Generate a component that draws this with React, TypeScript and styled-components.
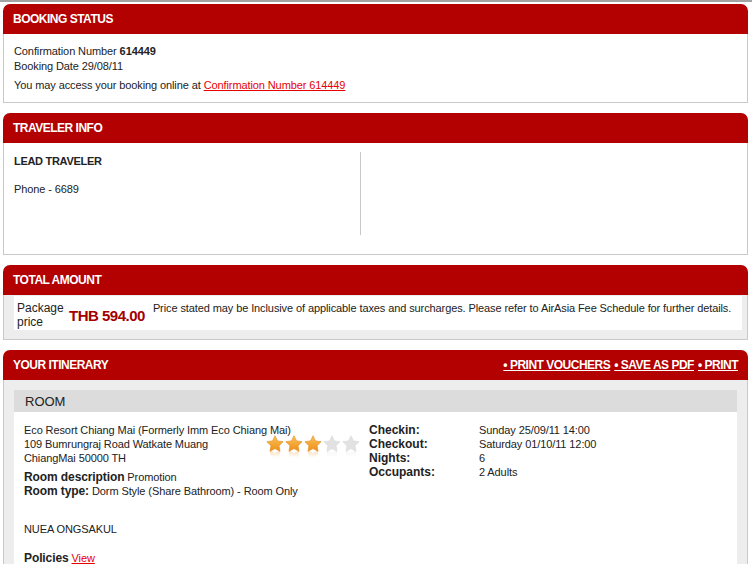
import React from "react";
import styled, { createGlobalStyle } from "styled-components";

const GlobalStyle = createGlobalStyle`
  body {
    margin: 0;
    background: #fff;
    font-family: "Liberation Sans", Arial, sans-serif;
    font-size: 11px;
    letter-spacing: -0.1px;
    color: #222;
  }
`;

const Page = styled.div`
  border-top: 2px solid #a3a3a3;
  padding: 2px 4px 0 3px;
`;

const Panel = styled.section`
  margin-bottom: 10px;
`;

const PanelHeader = styled.div`
  height: 30px;
  background: #b30000;
  border-radius: 7px 7px 0 0;
  display: flex;
  align-items: center;
  justify-content: space-between;
  padding: 0 10px;
  color: #fff;
  font-weight: bold;
  font-size: 12px;
  letter-spacing: -0.5px;
`;

const HeaderLinks = styled.div`
  display: flex;
  gap: 4px;
`;

const HeaderLink = styled.a`
  color: #fff;
  text-decoration: underline;
  cursor: pointer;
`;

const PanelBody = styled.div<{ $grey?: boolean }>`
  border: 1px solid #c9c9c9;
  border-top: none;
  background: ${(p) => (p.$grey ? "#ededed" : "#fff")};
`;

const StatusBody = styled.div`
  padding: 10px 10px 9px;
  line-height: 15px;
`;

const AccessLine = styled.div`
  margin-top: 4px;
`;

const RedLink = styled.a`
  color: #e60000;
  text-decoration: underline;
  cursor: pointer;
`;

const TravelerBody = styled.div`
  display: flex;
  padding: 9px 0 19px 10px;
`;

const LeadColumn = styled.div`
  width: 346px;
  height: 81px;
  border-right: 1px solid #c8c8c8;
  padding-top: 2px;
  line-height: 14px;
`;

const LeadTitle = styled.div`
  font-weight: bold;
  font-size: 11px;
  letter-spacing: -0.3px;
  margin-bottom: 14px;
`;

const TotalBody = styled.div`
  padding: 1px 5px 9px 10px;
`;

const PriceRow = styled.div`
  background: #fff;
  display: flex;
  align-items: flex-start;
  padding: 5px 3px 1px;
`;

const PriceLabel = styled.div`
  width: 46px;
  flex-shrink: 0;
  font-size: 12px;
  line-height: 14px;
  letter-spacing: 0;
`;

const PriceValue = styled.div`
  align-self: center;
  margin: 0 8px 0 6px;
  font-size: 15px;
  font-weight: bold;
  letter-spacing: -0.5px;
  color: #a30000;
  white-space: nowrap;
`;

const PriceNote = styled.div`
  line-height: 14px;
  white-space: nowrap;
`;

const ItineraryBody = styled.div`
  padding: 10px 10px 0;
`;

const RoomBox = styled.div`
  background: #fff;
`;

const RoomHeader = styled.div`
  height: 22px;
  background: #dcdcdc;
  padding-left: 11px;
  display: flex;
  align-items: center;
  font-size: 13px;
  letter-spacing: 0;
  color: #222;
`;

const RoomContent = styled.div`
  display: flex;
  padding: 11px 10px 2px;
  line-height: 14px;
`;

const RoomLeft = styled.div`
  width: 345px;
`;

const AddressGrid = styled.div`
  display: grid;
  grid-template-columns: 243px auto;
`;

const FullLine = styled.div`
  grid-column: 1 / -1;
  white-space: nowrap;
`;

const Stars = styled.div`
  display: flex;
  gap: 1px;
  align-self: center;
  margin: -2px 0 -1px -1px;
  -webkit-box-reflect: below -2px linear-gradient(transparent 55%, rgba(255, 255, 255, 0.35));
`;

const InfoLine = styled.div<{ $gap?: number }>`
  margin-top: ${(p) => p.$gap ?? 0}px;
  white-space: nowrap;
`;

const Strong = styled.b`
  font-size: 12px;
  letter-spacing: -0.1px;
`;

const Details = styled.div`
  display: grid;
  grid-template-columns: 110px auto;
  align-content: start;
`;

const DetailLabel = styled.div`
  font-weight: bold;
  font-size: 12px;
  letter-spacing: 0;
`;

const STAR = "M9 0.8l2.5 5.1 5.6 0.8-4.05 3.95 0.95 5.6L9 13.6l-5 2.65 0.95-5.6L0.9 6.7l5.6-0.8z";

function Star({ on }: { on: boolean }) {
  return (
    <svg width="18" height="17" viewBox="0 0 18 17">
      <defs>
        <linearGradient id="gold" x1="0" y1="0" x2="0" y2="1">
          <stop offset="0" stopColor="#fbc25a" />
          <stop offset="1" stopColor="#ee8e17" />
        </linearGradient>
      </defs>
      <path
        d={STAR}
        fill={on ? "url(#gold)" : "#e2e2e2"}
        stroke={on ? "#e08a1a" : "#d6d6d6"}
        strokeWidth="0.6"
      />
    </svg>
  );
}

export default function App() {
  const details: [string, string][] = [
    ["Checkin:", "Sunday 25/09/11 14:00"],
    ["Checkout:", "Saturday 01/10/11 12:00"],
    ["Nights:", "6"],
    ["Occupants:", "2 Adults"],
  ];

  return (
    <Page>
      <GlobalStyle />

      <Panel>
        <PanelHeader>BOOKING STATUS</PanelHeader>
        <PanelBody>
          <StatusBody>
            <div>
              Confirmation Number <b>614449</b>
            </div>
            <div>Booking Date 29/08/11</div>
            <AccessLine>
              You may access your booking online at{" "}
              <RedLink>Confirmation Number 614449</RedLink>
            </AccessLine>
          </StatusBody>
        </PanelBody>
      </Panel>

      <Panel>
        <PanelHeader>TRAVELER INFO</PanelHeader>
        <PanelBody>
          <TravelerBody>
            <LeadColumn>
              <LeadTitle>LEAD TRAVELER</LeadTitle>
              <div>Phone - 6689</div>
            </LeadColumn>
          </TravelerBody>
        </PanelBody>
      </Panel>

      <Panel>
        <PanelHeader>TOTAL AMOUNT</PanelHeader>
        <PanelBody $grey>
          <TotalBody>
            <PriceRow>
              <PriceLabel>Package price</PriceLabel>
              <PriceValue>THB 594.00</PriceValue>
              <PriceNote>
                Price stated may be Inclusive of applicable taxes and surcharges. Please refer to
                AirAsia Fee Schedule for further details.
              </PriceNote>
            </PriceRow>
          </TotalBody>
        </PanelBody>
      </Panel>

      <Panel>
        <PanelHeader>
          <span>YOUR ITINERARY</span>
          <HeaderLinks>
            <HeaderLink>• PRINT VOUCHERS</HeaderLink>
            <HeaderLink>• SAVE AS PDF</HeaderLink>
            <HeaderLink>• PRINT</HeaderLink>
          </HeaderLinks>
        </PanelHeader>
        <PanelBody $grey>
          <ItineraryBody>
            <RoomBox>
              <RoomHeader>ROOM</RoomHeader>
              <RoomContent>
                <RoomLeft>
                  <AddressGrid>
                    <FullLine>Eco Resort Chiang Mai (Formerly Imm Eco Chiang Mai)</FullLine>
                    <div>109 Bumrungraj Road Watkate Muang</div>
                    <Stars>
                      {[0, 1, 2, 3, 4].map((i) => (
                        <Star key={i} on={i < 3} />
                      ))}
                    </Stars>
                    <FullLine>ChiangMai 50000 TH</FullLine>
                  </AddressGrid>
                  <InfoLine $gap={5}>
                    <Strong>Room description</Strong> Promotion
                  </InfoLine>
                  <InfoLine>
                    <Strong>Room type:</Strong> Dorm Style (Share Bathroom) - Room Only
                  </InfoLine>
                  <InfoLine $gap={24}>NUEA ONGSAKUL</InfoLine>
                  <InfoLine $gap={15}>
                    <Strong>Policies</Strong> <RedLink>View</RedLink>
                  </InfoLine>
                </RoomLeft>
                <Details>
                  {details.map(([label, value]) => (
                    <React.Fragment key={label}>
                      <DetailLabel>{label}</DetailLabel>
                      <div>{value}</div>
                    </React.Fragment>
                  ))}
                </Details>
              </RoomContent>
            </RoomBox>
          </ItineraryBody>
        </PanelBody>
      </Panel>
    </Page>
  );
}
